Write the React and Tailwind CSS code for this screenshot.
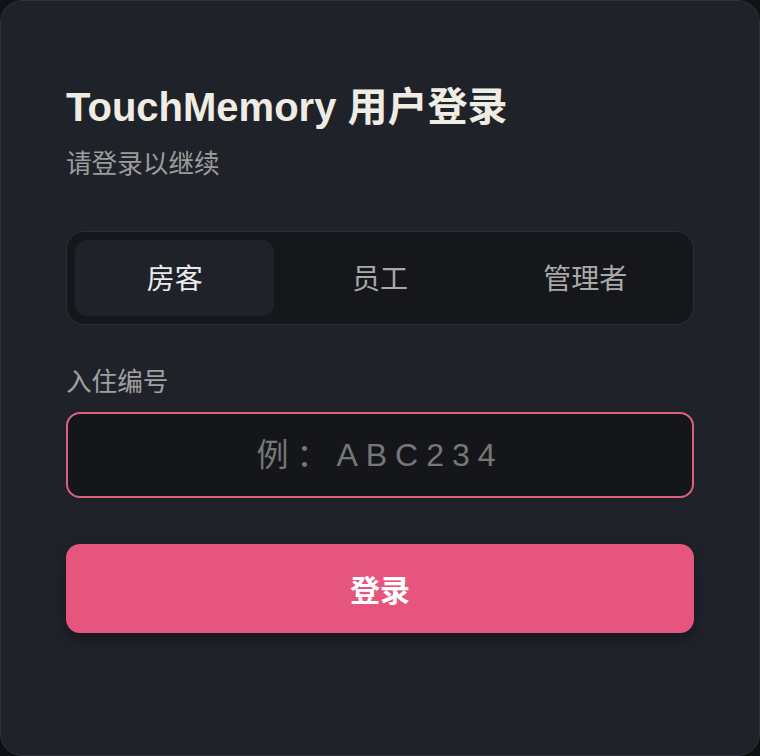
import React, { useState } from 'react';

const roles = ['房客', '员工', '管理者'];

const sans = "font-['Liberation_Sans','Noto_Sans_CJK_SC',sans-serif]";

export default function App() {
  const [role, setRole] = useState('房客');
  const [code, setCode] = useState('');

  return (
    <div className={`min-h-[756px] w-[760px] bg-[#111215] ${sans}`}>
      <div className="h-[756px] w-full rounded-[22px] border border-[#2e3138] bg-[#1f2229] px-[65px] pt-[82px] shadow-lg">
        {/* Header */}
        <h1 className="text-[40px] font-bold leading-[48px] text-[#efece4]">
          TouchMemory 用户登录
        </h1>
        <p className="mt-[15px] text-[25.6px] leading-[36px] text-[#9c9c9c]">
          请登录以继续
        </p>

        {/* Role tabs */}
        <div className="mt-[49px] flex h-[94px] gap-[6px] rounded-[18px] border border-[#2c2f35] bg-[#15171b] p-[8px]">
          {roles.map((r) => (
            <button
              key={r}
              onClick={() => setRole(r)}
              className={`flex-1 rounded-[12px] pt-[3px] text-[28px] ${
                role === r ? 'bg-[#1f2229] text-[#ebebeb]' : 'text-[#a9a9a9]'
              }`}
            >
              {r}
            </button>
          ))}
        </div>

        {/* Code input */}
        <label className="mt-[39px] block text-[25.6px] leading-[36px] text-[#a0a0a0]">
          入住编号
        </label>
        <input
          value={code}
          onChange={(e) => setCode(e.target.value)}
          placeholder="例：ABC234"
          className="mt-[12px] block h-[86px] w-full rounded-[14px] border-2 border-[#d9607f] bg-[#15161a] text-center text-[32px] tracking-[0.25em] text-[#e5e5e5] outline-none placeholder:text-[#777777]"
        />

        {/* Submit */}
        <button className="mt-[46px] h-[89px] w-full rounded-[14px] bg-[#e6557e] pt-[3px] text-[30px] font-bold text-white shadow-[0_6px_14px_rgba(0,0,0,0.3)]">
          登录
        </button>
      </div>
    </div>
  );
}
